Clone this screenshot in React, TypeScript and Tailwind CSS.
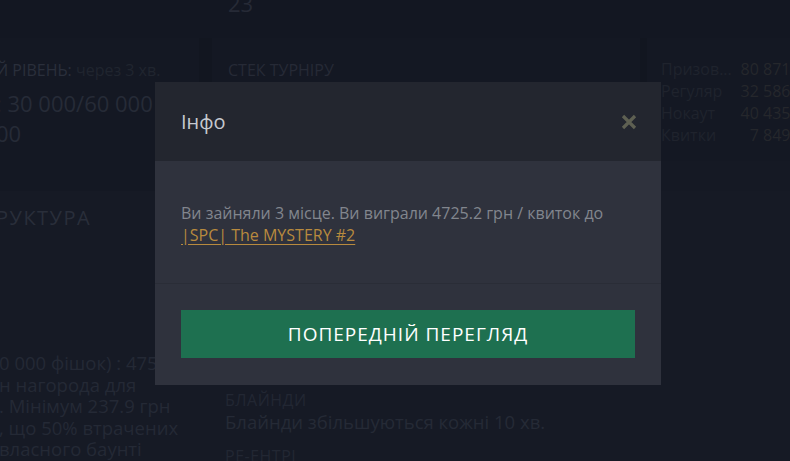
import React from "react";

const font = { fontFamily: '"Open Sans", "Noto Sans", sans-serif' };

export default function App() {
  return (
    <div
      className="relative w-[790px] h-[461px] overflow-hidden bg-[#161a25]"
      style={font}
    >
      {/* top strip */}
      <div className="h-[38px] bg-[#131722] overflow-hidden">
        <div className="pl-[228px] -mt-[12px] text-[22px] leading-[30px] text-[#262a36]">
          23
        </div>
      </div>

      {/* cards row */}
      <div className="flex h-[153px] bg-[#121620]">
        <div className="w-[199px] shrink-0 bg-[#141823] overflow-hidden pt-[22px]">
          <div className="-ml-[4px] whitespace-nowrap text-[16px] leading-[20px] uppercase text-[#2a2f3b]">
            Й рівень: <span className="normal-case text-[#20252f]">через 3 хв.</span>
          </div>
          <div className="-ml-[4px] mt-[8px] whitespace-nowrap text-[22px] leading-[30px] text-[#262b37]">
            : 30 000/60 000
          </div>
          <div className="-ml-[4px] whitespace-nowrap text-[22px] leading-[30px] text-[#262b37]">
            00
          </div>
        </div>
        <div className="w-[13px] shrink-0" />
        <div className="w-[428px] shrink-0 bg-[#141823] pt-[22px] pl-[16px]">
          <div className="text-[16px] leading-[20px] uppercase text-[#262a36]">
            Стек турніру
          </div>
        </div>
        <div className="w-[7px] shrink-0" />
        <div className="flex-1 min-w-0 flex flex-col bg-[#141823]">
          <div className="flex-1 pt-[20px] pl-[14px] text-[16px] leading-[22px] overflow-hidden">
            {[
              ["Призов...", "80 871.28"],
              ["Регуляр", "32 586.90"],
              ["Нокаут", "40 435.14"],
              ["Квитки", "7 849.24"],
            ].map(([l, v]) => (
              <div key={l} className="flex whitespace-nowrap">
                <span className="w-[77px] shrink-0 text-[#1f232d]">{l}</span>
                <span className="w-[75px] shrink-0 text-right text-[#25272c]">{v}</span>
              </div>
            ))}
          </div>
          <div className="h-[30px] bg-[#151924]" />
        </div>
      </div>

      {/* bottom section */}
      <div className="flex">
        <div className="w-[212px] shrink-0 pt-[14px] overflow-hidden">
          <div className="-ml-[4px] whitespace-nowrap text-[20px] leading-[26px] tracking-[1.5px] uppercase text-[#292e3a]">
            руктура
          </div>
          <div className="mt-[121px] -ml-[1px] text-[18.5px] leading-[21.5px] text-[#242935] whitespace-nowrap">
            <div>0 000 фішок) : 475</div>
            <div>н нагорода для</div>
            <div>. Мінімум 237.9 грн</div>
            <div>, що 50% втрачених</div>
            <div>власного баунті</div>
          </div>
        </div>
        <div className="pl-[13px] pt-[199px] whitespace-nowrap">
          <div className="text-[16px] leading-[20px] uppercase tracking-[0.5px] text-[#222733]">
            Блайнди
          </div>
          <div className="text-[18.5px] leading-[24px] text-[#252a36]">
            Блайнди збільшуються кожні 10 хв.
          </div>
          <div className="mt-[12px] text-[16px] leading-[20px] uppercase tracking-[0.5px] text-[#222733]">
            Ре-ентрі
          </div>
        </div>
      </div>

      {/* modal */}
      <div className="absolute left-[155px] top-[82px] w-[506px] flex flex-col">
        <div className="h-[79px] bg-[#23262f] flex items-center justify-between pl-[26px] pr-[24px]">
          <div className="text-[20px] leading-[28px] text-[#c6c9cf]">Інфо</div>
          <svg width="16" height="16" viewBox="0 0 16 16" className="block">
            <path
              d="M2 2 L14 14 M14 2 L2 14"
              stroke="#5e6052"
              strokeWidth="3.2"
              strokeLinecap="butt"
            />
          </svg>
        </div>
        <div className="h-[123px] bg-[#2f323d] px-[26px] pt-[41px] border-b border-[#2a2d37]">
          <div className="text-[16px] leading-[22px] text-[#82868e]">
            Ви зайняли 3 місце. Ви виграли 4725.2 грн / квиток до{" "}
            <a className="text-[#b88a3e] underline underline-offset-[3px]" href="#">
              |SPC| The MYSTERY #2
            </a>
          </div>
        </div>
        <div className="bg-[#2f323d] px-[26px] pt-[26px] pb-[27px]">
          <button className="w-full h-[48px] bg-[#1e7050] text-white text-[19px] tracking-[1px] uppercase flex items-center justify-center">
            Попередній перегляд
          </button>
        </div>
      </div>
    </div>
  );
}
